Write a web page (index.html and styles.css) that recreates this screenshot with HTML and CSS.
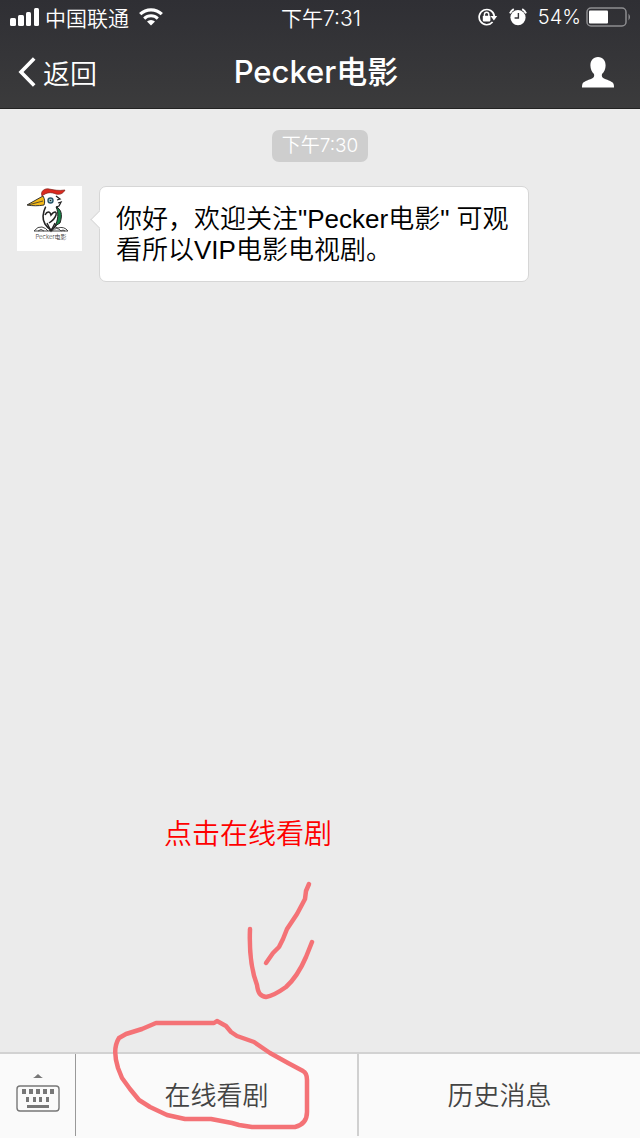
FILE: index.html
```html
<!DOCTYPE html>
<html lang="zh-CN">
<head>
	<meta charset="utf-8">
	<meta name="viewport" content="width=device-width, initial-scale=1">
	<title>Pecker电影</title>
	<link rel="stylesheet" href="styles.css">
</head>
<body>

<div class="screen">
	<header class="header">
		<div class="status">
			<div class="status-left">
				<svg class="signal" width="30" height="18" viewBox="0 0 30 18" fill="#fff">
					<rect x="0" y="10" width="6" height="8" rx="1.5"/>
					<rect x="8" y="7" width="6" height="11" rx="1.5"/>
					<rect x="16" y="4" width="5" height="14" rx="1.5"/>
					<rect x="24" y="0" width="5" height="18" rx="1.5"/>
				</svg>
				<span>中国联通</span>
				<svg class="wifi" width="24" height="18" viewBox="0 0 24 18">
					<path d="M1.2 6.2a15.5 15.5 0 0 1 21.6 0" fill="none" stroke="#fff" stroke-width="3.2"/>
					<path d="M5.2 10.6a9.8 9.8 0 0 1 13.6 0" fill="none" stroke="#fff" stroke-width="3"/>
					<path d="M8 13.6a5.8 5.8 0 0 1 8 0L12 17.6z" fill="#fff"/>
				</svg>
			</div>
			<div class="status-time">下午7:31</div>
			<div class="status-right">
				<svg width="20" height="18" viewBox="0 0 20 18">
					<path d="M14.6 14a7.6 7.6 0 1 1 1.7-5.8" fill="none" stroke="#fff" stroke-width="1.7"/>
					<path d="M12.6 8h6.6l-3.3 4.4z" fill="#fff"/>
					<rect x="4.8" y="7.8" width="7.6" height="5.6" rx=".8" fill="#fff"/>
					<path d="M6.4 8V6.4a2.2 2.2 0 0 1 4.4 0V8" fill="none" stroke="#fff" stroke-width="1.4"/>
				</svg>
				<svg class="alarm" width="18" height="18" viewBox="0 0 18 18">
					<circle cx="9" cy="9.6" r="7.6" fill="#fff"/>
					<path d="M1 5.4A9 9 0 0 1 4.8 1.2M13.2 1.2A9 9 0 0 1 17 5.4" fill="none" stroke="#fff" stroke-width="2"/>
					<path d="M9.4 5v5H5.6" fill="none" stroke="#343438" stroke-width="1.4"/>
				</svg>
				<span class="percent">54%</span>
				<svg class="battery" width="46" height="20" viewBox="0 0 46 20">
					<rect x="1" y="1" width="39" height="18" rx="4" fill="none" stroke="#8d8d90" stroke-width="1.5"/>
					<rect x="3" y="3.5" width="19" height="13" rx="1" fill="#fff"/>
					<path d="M42.5 6.5q3 3.5 0 7z" fill="#8d8d90"/>
				</svg>
			</div>
		</div>
		<div class="nav">
			<a class="back" href="#">
				<svg width="18" height="30" viewBox="0 0 18 30" fill="none" stroke="#fff" stroke-width="3.6">
					<path d="M16.2 1.5L3 15l13.2 13.5"/>
				</svg>
				<span>返回</span>
			</a>
			<h1 class="title">Pecker电影</h1>
			<button class="profile" type="button" aria-label="公众号资料">
				<svg width="32" height="31" viewBox="0 0 32 31" fill="#fff">
					<path d="M16 0c5 0 7.6 3.7 7.6 8.4 0 3.6-1.6 6.6-3.6 8.6-.6 2.4.2 3.6 2 4.6 4.6 2 8.6 3 9.6 5.4.4 1.2.4 2.2.4 3.5H0c0-1.3 0-2.3.4-3.5 1-2.400 5-3.400 9.600-5.400 1.800-1 2.600-2.200 2-4.600-2-2-3.600-5-3.600-8.600C8.400 3.700 11 0 16 0z"/>
				</svg>
			</button>
		</div>
	</header>

	<main class="chat">
		<div class="date"><time>下午7:30</time></div>
		<div class="message">
			<svg class="avatar" width="65" height="65" viewBox="0 0 65 65" role="img" aria-label="Pecker电影">
				<rect width="65" height="65" fill="#fff"/>
				<!-- nest -->
				<g fill="none" stroke="#444" stroke-width="1">
					<path d="M17 45q4-5 8-4 4 1 6 4M21 45q3-3 6 0M32 45q4-6 9-3M35 45q5-5 9 0M41 42q6-2 10 3M44 45q2-2 4 0M17 45h34"/>
				</g>
				<!-- body and wing -->
				<path d="M29 20c-3 6-4 13-1 18 2 3 4 5 6 6 5-3 8-9 8-15 0-4-1-7-3-9z" fill="#fff" stroke="#222" stroke-width="1.6"/>
				<path d="M39 21c5 2 7 7 4 16l-5 3c3-6 4-13 1-19z" fill="#168447" stroke="#222" stroke-width="1"/>
				<path d="M28 29c2-4 5-4 6 0 3-4 6-4 5 0-1 4-4 6-7 8" fill="none" stroke="#222" stroke-width="1.5"/>
				<path d="M30 37l4 8 4-8" fill="none" stroke="#222" stroke-width="1.4"/>
				<!-- head -->
				<path d="M27 9c4-3 11-2 14 1 2 4 1 9-2 11-5 3-10 1-12-2z" fill="#fff"/>
				<path d="M39 10l4 3-3 1M41 17l3-1-2 4-3 1" fill="none" stroke="#222" stroke-width="1.3"/>
				<circle cx="33.5" cy="14.5" r="2.5" fill="#a9d1d7" stroke="#27566a" stroke-width="1.4"/>
				<circle cx="33.5" cy="14.5" r=".8" fill="#222"/>
				<path d="M10 19l16-9c2 3 2 7 1 9-6 1-11 1-17 0z" fill="#f3b817" stroke="#333" stroke-width="1"/>
				<path d="M11 19l15-4" stroke="#333" stroke-width=".8"/>
				<!-- crest -->
				<path d="M25 10c-2-5 3-8 7-7 6 1 9 2 16 1-2 4-6 5-9 4-5-2-9-2-14 2z" fill="#dc291e" stroke="#7c2019" stroke-width=".7"/>
				<text class="avatar-name" x="34" y="53" text-anchor="middle">Pecker电影</text>
			</svg>
			<p class="bubble">你好，欢迎关注"Pecker电影" 可观看所以VIP电影电视剧。</p>
		</div>
	</main>

	<footer class="menu">
		<button class="keyboard" type="button" aria-label="切换键盘">
			<svg width="44" height="40" viewBox="0 0 44 40">
				<path d="M17 5q2-1 5-4 3 3 5 4z" fill="#777"/>
				<rect x="1" y="13" width="42" height="25" rx="3" fill="none" stroke="#777" stroke-width="1.4"/>
				<path d="M6 16h4v5H6zM13 16h4v5h-4zM20 16h4v5h-4zM27 16h4v5h-4zM34 16h4v5h-4zM10 24h3v5h-3zM17 24h3v5h-3zM23 24h3v5h-3zM30 24h3v5h-3zM11 32h22v3H11z" fill="#777"/>
			</svg>
		</button>
		<button class="menu-item" type="button">在线看剧</button>
		<button class="menu-item" type="button">历史消息</button>
	</footer>

	<!-- hand-drawn hint, lies over the chat and the menu -->
	<div class="hint">
		<p class="hint-text">点击在线看剧</p>
		<svg class="hint-drawing" width="210" height="258" viewBox="110 880 210 258" fill="none" stroke="#f47276" stroke-width="4.5" stroke-linecap="round" stroke-linejoin="round">
			<path d="M309 884L306 891L305 899L297 914L287 929L283 939L279 947L273 953L266 963"/>
			<path d="M250 929C249 954 252 972 257 985C258 993 260 996 266 997C272 996 279 992 286 987C297 977 303 964 306 957L312 942"/>
			<path d="M217 1021L214 1023H156L142 1029L126 1034L119 1038Q112 1049 118 1068L122 1078L130 1089L139 1100L150 1107L167 1115L185 1119L211 1119L232 1123L239 1125L252 1127H295Q307 1124 307 1112V1080Q307 1073 303 1071L288 1063L270 1053L254 1042L237 1036L231 1032L226 1026Z"/>
		</svg>
	</div>
</div>

</body>
</html>
```

FILE: styles.css
```css
* {
	box-sizing: border-box;
}

html, body {
	margin: 0;
	padding: 0;
}

body {
	font-family: Inter, "Noto Sans CJK SC", sans-serif;
	font-weight: 350;
	background-color: #ebebeb;
}

button {
	padding: 0;
	border: 0;
	background: none;
	font-family: inherit;
	font-weight: inherit;
	cursor: pointer;
}

svg {
	display: block;
	flex: none;
}

.screen {
	position: relative;
	display: flex;
	flex-direction: column;
	min-height: 100vh;
}

/* header */
.header {
	color: #fff;
	background: linear-gradient(#2f2f34, #3b3b3c);
	border-bottom: 1px solid #222;
}

.status, .nav {
	display: grid;
	grid-template-columns: 1fr auto 1fr;
	align-items: center;
}

.status {
	height: 34px;
	padding: 0 8px 0 10px;
	font-size: 21px;
}

.status-left, .status-right {
	display: flex;
	align-items: center;
}

.status-left {
	gap: 5px;
}

.wifi {
	margin-left: 5px;
}

.status-right {
	justify-content: flex-end;
}

.alarm {
	margin-left: 11px;
}

.percent {
	margin: 0 5px 0 11px;
	font-size: 20px;
}

.nav {
	height: 74px;
	padding: 2px 26px 0 18px;
}

.back {
	display: flex;
	align-items: center;
	gap: 7px;
	color: #fff;
	font-size: 27px;
	text-decoration: none;
}

.title {
	margin: 0;
	font-size: 31px;
	font-weight: 500;
	line-height: 40px;
}

.profile {
	justify-self: end;
}

/* chat */
.chat {
	flex: 1;
	padding: 21px 17px;
}

.date {
	display: flex;
	justify-content: center;
}

.date time {
	padding: 0 10px;
	border-radius: 7px;
	color: #fff;
	background-color: #cecece;
	font-size: 19px;
	line-height: 32px;
}

.message {
	display: flex;
	align-items: flex-start;
	gap: 17px;
	margin-top: 24px;
}

.avatar-name {
	font-size: 6px;
	fill: #333;
}

.bubble {
	position: relative;
	max-width: 430px;
	margin: 0;
	padding: 17px 16px 15px;
	border: 1px solid #d6d6d6;
	border-radius: 7px;
	color: #000;
	background-color: #fff;
	font-family: "Liberation Sans", "Noto Sans CJK SC", sans-serif;
	font-size: 26px;
	line-height: 31px;
}

.bubble::before {
	content: "";
	position: absolute;
	top: 26px;
	left: -7px;
	width: 12px;
	height: 12px;
	border: solid #d6d6d6;
	border-width: 0 0 1px 1px;
	background-color: #fff;
	transform: rotate(45deg);
}

/* bottom menu */
.menu {
	display: flex;
	height: 86px;
	padding-bottom: 2px;
	border-top: 2px solid #d2d2d2;
	background-color: #fafafa;
}

.keyboard {
	display: flex;
	flex: 0 0 76px;
	align-items: center;
	justify-content: center;
	padding-bottom: 4px;
	border-right: 1px solid #999;
}

.menu-item {
	flex: 1;
	padding-bottom: 4px;
	color: #444;
	font-size: 26px;
}

.menu-item + .menu-item {
	border-left: 2px solid #d0d0d0;
}

/* hint */
.hint {
	position: absolute;
	left: 110px;
	bottom: 0;
	pointer-events: none;
}

.hint-text {
	margin: 0 0 26px;
	padding-left: 54px;
	color: #f00;
	font-size: 28px;
	line-height: 40px;
}
```
